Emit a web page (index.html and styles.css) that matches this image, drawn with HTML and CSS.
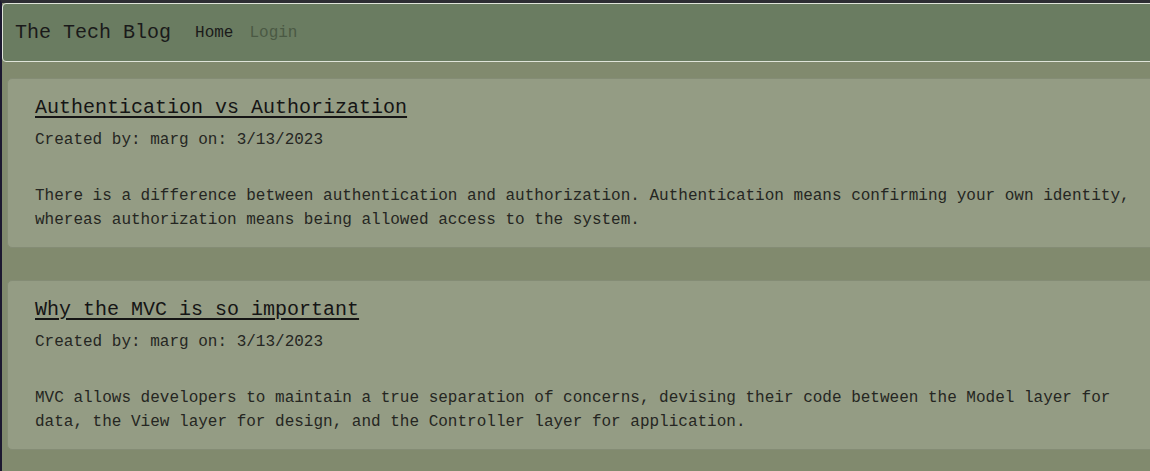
FILE: index.html
```html
<!DOCTYPE html>
<html lang="en">
<head>
<meta charset="utf-8">
<title>The Tech Blog</title>
<link rel="stylesheet" href="styles.css">
</head>
<body>
<div class="page">
  <header class="navbar">
    <a class="brand" href="#">The Tech Blog</a>
    <nav class="nav">
      <a class="nav-link active" href="#">Home</a>
      <a class="nav-link" href="#">Login</a>
    </nav>
  </header>
  <main class="posts">
    <article class="card">
      <h2 class="post-title"><a href="#">Authentication vs Authorization</a></h2>
      <p class="meta">Created by: marg on: 3/13/2023</p>
      <p class="body">There is a difference between authentication and authorization. Authentication means confirming your own identity, whereas authorization means being allowed access to the system.</p>
    </article>
    <article class="card">
      <h2 class="post-title"><a href="#">Why the MVC is so important</a></h2>
      <p class="meta">Created by: marg on: 3/13/2023</p>
      <p class="body">MVC allows developers to maintain a true separation of concerns, devising their code between the Model layer for data, the View layer for design, and the Controller layer for application.</p>
    </article>
  </main>
</div>
</body>
</html>
```

FILE: styles.css
```css
html, body {
  margin: 0;
  padding: 0;
}
body {
  background: #818a6e;
  border-top: 3px solid #2d2d33;
  border-left: 2px solid #1c1830;
  overflow: hidden;
  height: 468px;
  font-family: "Liberation Mono", "Courier New", monospace;
  color: #252622;
}
.page {
  width: 1220px;
}
.navbar {
  display: flex;
  align-items: center;
  height: 56px;
  padding-top: 1px;
  padding-left: 12px;
  background: #6a7c61;
  border: 1px solid #dfe4d9;
  border-radius: 4px;
}
.brand {
  font-size: 20px;
  color: #1a1a1a;
  text-decoration: none;
  margin-right: 16px;
  line-height: 1;
}
.nav {
  display: flex;
}
.nav-link {
  font-size: 16px;
  padding: 0 8px;
  color: #4a5944;
  text-decoration: none;
}
.nav-link.active {
  color: #1a1a1a;
}
.posts {
  display: flex;
  flex-direction: column;
  gap: 32px;
  padding: 16px 0 0 5px;
}
.card {
  width: 1110px;
  padding: 17px 28px 15px 27px;
  background: #949c84;
  border: 1px solid #848c75;
  border-radius: 5px;
}
.post-title {
  margin: 0;
  font-size: 20px;
  font-weight: normal;
  line-height: 24px;
}
.post-title a {
  color: #151515;
  text-decoration: underline;
  text-underline-offset: 3px;
}
.meta {
  margin: 8px 0 0;
  font-size: 16px;
  line-height: 24px;
}
.body {
  margin: 32px 0 0;
  font-size: 16px;
  line-height: 24px;
}
```
